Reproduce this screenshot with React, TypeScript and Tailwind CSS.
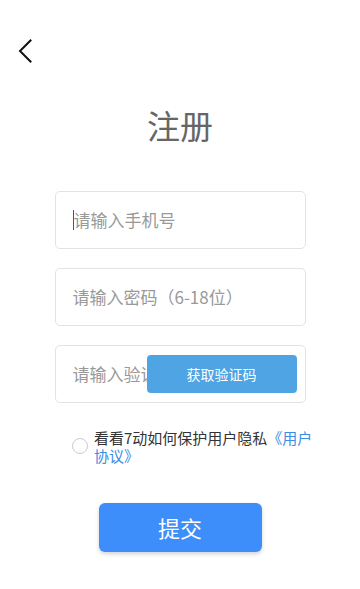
import React from 'react';

const font = { fontFamily: '"Noto Sans CJK SC", "Noto Sans", sans-serif' };

export default function App() {
  return (
    <div className="w-[360px] h-[589px] bg-white overflow-hidden" style={font}>
      <div className="pt-[39px] pl-[18px]">
        <svg width="14" height="24" viewBox="0 0 14 24" fill="none">
          <path d="M12.5 1.5 L2 12 L12.5 22.5" stroke="#111" strokeWidth="2" strokeLinecap="square" />
        </svg>
      </div>

      <h1 className="mt-[42px] text-center text-[33px] leading-[40px] text-[#666]">注册</h1>

      <div className="mt-[46px] w-[251px] mx-auto flex flex-col gap-[19px]">
        <div className="h-[58px] border border-[#e3e3e3] rounded-[5px] flex items-center pl-[17px]">
          <span className="w-px h-[20px] bg-[#555]" />
          <span className="text-[17px] text-[#999]">请输入手机号</span>
        </div>
        <div className="h-[58px] border border-[#e3e3e3] rounded-[5px] flex items-center pl-[17px]">
          <span className="text-[17px] text-[#999]">请输入密码（6-18位）</span>
        </div>
        <div className="relative h-[58px] border border-[#e3e3e3] rounded-[5px] flex items-center pl-[17px]">
          <span className="text-[17px] text-[#999] whitespace-nowrap">请输入验证码</span>
          <button className="absolute left-[91px] top-[9px] w-[150px] h-[38px] rounded-[4px] bg-[#4fa4e4] text-white text-[14px]">
            获取验证码
          </button>
        </div>
      </div>

      <div className="mt-[26px] pl-[72px] flex items-start gap-[6px]">
        <span className="mt-[9px] w-[16px] h-[16px] rounded-full border border-[#ccc] shrink-0" />
        <p className="w-[226px] text-[15px] leading-[18px] text-[#333]">
          看看7动如何保护用户隐私<span className="text-[#3b8ce6]">《用户协议》</span>
        </p>
      </div>

      <div className="mt-[38px] flex justify-center">
        <button className="w-[163px] h-[49px] rounded-[6px] bg-[#3d8dfb] text-white text-[22px] shadow-[0_2px_4px_rgba(0,0,0,0.18)]">
          提交
        </button>
      </div>
    </div>
  );
}
